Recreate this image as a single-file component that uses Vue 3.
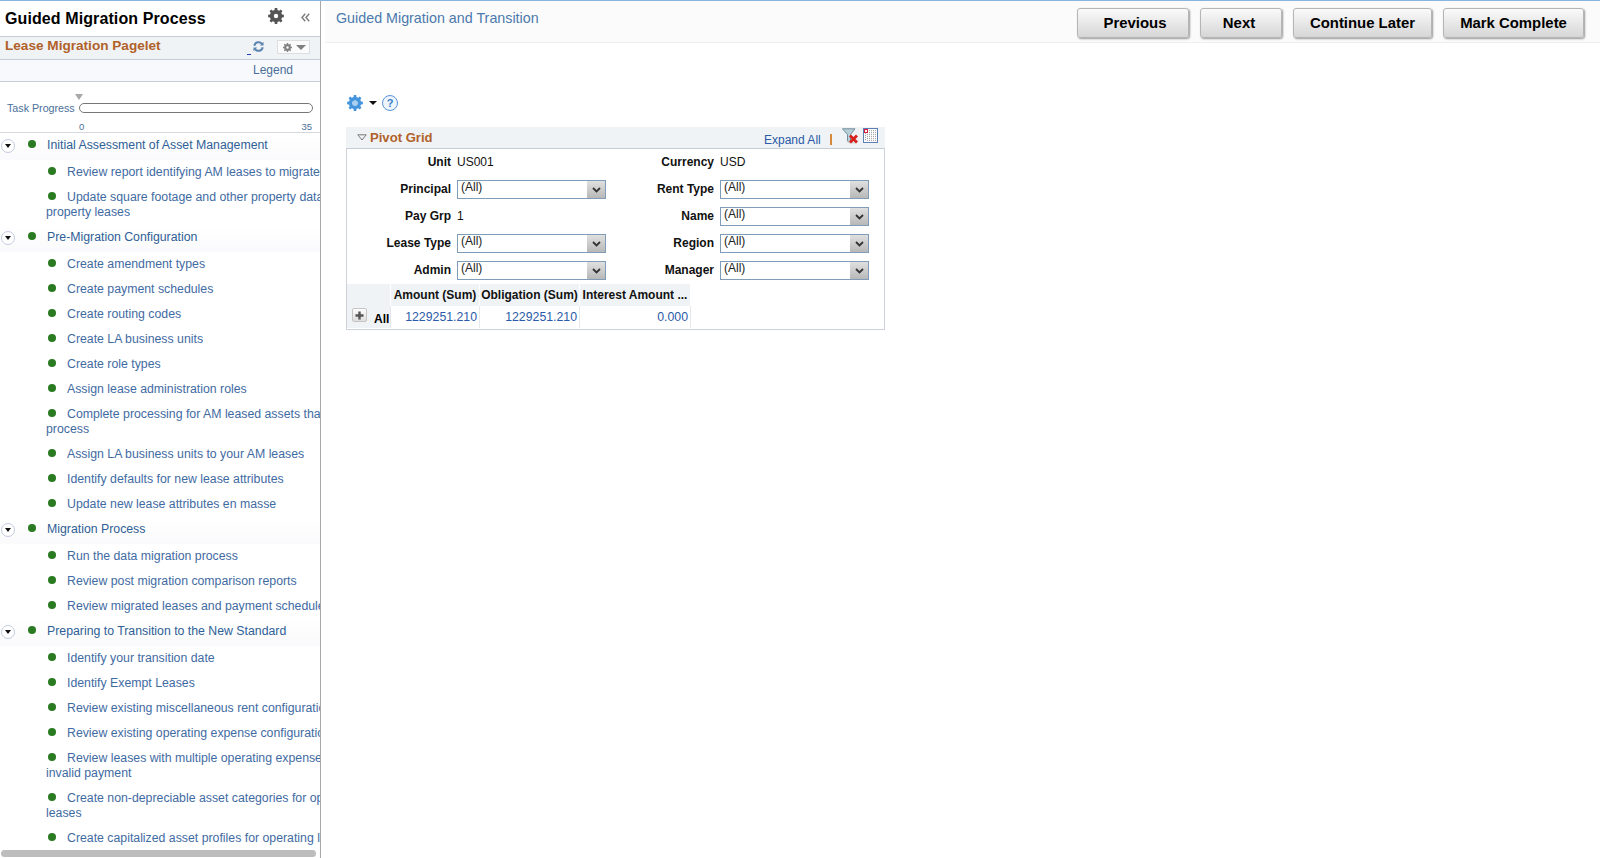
<script setup>
const gearPath = (cx, cy, ro, ri, hole, teeth = 8) => {
  let d = ''
  const step = (Math.PI * 2) / teeth
  for (let i = 0; i < teeth; i++) {
    const a = i * step
    const pts = [
      [ri, a - step * 0.3],
      [ro, a - step * 0.2],
      [ro, a + step * 0.2],
      [ri, a + step * 0.3],
    ]
    pts.forEach(([r, t], j) => {
      const x = (cx + r * Math.cos(t)).toFixed(2)
      const y = (cy + r * Math.sin(t)).toFixed(2)
      d += (i === 0 && j === 0 ? 'M' : 'L') + x + ' ' + y
    })
  }
  d += `Z M${cx - hole} ${cy} a${hole} ${hole} 0 1 0 ${hole * 2} 0 a${hole} ${hole} 0 1 0 ${-hole * 2} 0Z`
  return d
}
const gearLarge = gearPath(8, 8, 8, 6.2, 2.2)
const gearBlue = gearPath(8, 8, 8, 6.2, 2.6)
const gearSmall = gearPath(5, 5, 5, 3.8, 1.4)

const sections = [
  {
    title: 'Initial Assessment of Asset Management',
    items: [
      ['Review report identifying AM leases to migrate'],
      ['Update square footage and other property data for', 'property leases'],
    ],
  },
  {
    title: 'Pre-Migration Configuration',
    items: [
      ['Create amendment types'],
      ['Create payment schedules'],
      ['Create routing codes'],
      ['Create LA business units'],
      ['Create role types'],
      ['Assign lease administration roles'],
      ['Complete processing for AM leased assets that', 'process'],
      ['Assign LA business units to your AM leases'],
      ['Identify defaults for new lease attributes'],
      ['Update new lease attributes en masse'],
    ],
  },
  {
    title: 'Migration Process',
    items: [
      ['Run the data migration process'],
      ['Review post migration comparison reports'],
      ['Review migrated leases and payment schedules'],
    ],
  },
  {
    title: 'Preparing to Transition to the New Standard',
    items: [
      ['Identify your transition date'],
      ['Identify Exempt Leases'],
      ['Review existing miscellaneous rent configuration'],
      ['Review existing operating expense configuration'],
      ['Review leases with multiple operating expense', 'invalid payment'],
      ['Create non-depreciable asset categories for op', 'leases'],
      ['Create capitalized asset profiles for operating leases'],
    ],
  },
]

const filters = [
  { label: 'Unit', value: 'US001' },
  { label: 'Currency', value: 'USD' },
  { label: 'Principal' },
  { label: 'Rent Type' },
  { label: 'Pay Grp', value: '1' },
  { label: 'Name' },
  { label: 'Lease Type' },
  { label: 'Region' },
  { label: 'Admin' },
  { label: 'Manager' },
]
</script>

<template>
  <div class="page">
    <aside class="side">
      <div class="side-head">
        <span class="side-title">Guided Migration Process</span>
        <svg class="head-gear" width="16" height="16" viewBox="0 0 16 16"><path :d="gearLarge" fill="#555" fill-rule="evenodd" /></svg>
        <svg class="head-collapse" width="9" height="9" viewBox="0 0 9 9"><path d="M4.200 .8 1 4.500 4.200 8.200M8.200 .8 5 4.500 8.200 8.200" fill="none" stroke="#808080" stroke-width="1.500" /></svg>
      </div>
      <div class="pagelet-head">
        <span class="pagelet-title">Lease Migration Pagelet</span>
        <span class="underscore"></span>
        <svg class="refresh" width="11" height="11" viewBox="0 0 12 12"><path d="M1.400 5.200A4.700 4.700 0 0 1 9.800 3.200M10.600 6.800A4.700 4.700 0 0 1 2.200 8.800" fill="none" stroke="#5b84b0" stroke-width="2.200" /><path d="M11.500 .8V5H7.500ZM.5 11.200V7H4.500Z" fill="#5b84b0" /></svg>
        <span class="pagelet-menu">
          <svg width="9" height="9" viewBox="0 0 10 10"><path :d="gearSmall" fill="#808080" fill-rule="evenodd" /></svg>
          <i class="menu-caret"></i>
        </span>
      </div>
      <div class="legend-row">Legend</div>
      <div class="progress">
        <i class="progress-mark"></i>
        <div class="progress-line">
          <span class="progress-label">Task Progress</span>
          <span class="progress-bar"></span>
        </div>
        <div class="progress-scale"><span>0</span><span>35</span></div>
      </div>
      <div class="task-list">
        <template v-for="s in sections" :key="s.title">
          <div class="section-row">
            <span class="toggle"><i></i></span>
            <i class="dot section-dot"></i>
            <span class="section-title">{{ s.title }}</span>
          </div>
          <div v-for="it in s.items" :key="it[0]" class="item">
            <div class="item-first"><i class="dot"></i><span>{{ it[0] }}</span></div>
            <div v-if="it[1]" class="item-second">{{ it[1] }}</div>
          </div>
        </template>
      </div>
      <div class="hscroll"></div>
    </aside>

    <main class="main">
      <header class="main-head">
        <span class="main-title">Guided Migration and Transition</span>
        <div class="buttons">
          <button class="btn btn-prev">Previous</button>
          <button class="btn btn-next">Next</button>
          <button class="btn btn-later">Continue Later</button>
          <button class="btn btn-done">Mark Complete</button>
        </div>
      </header>
      <section class="content">
        <div class="tools">
          <svg width="16" height="16" viewBox="0 0 16 16"><path :d="gearBlue" fill="#4595dc" fill-rule="evenodd" /><circle cx="8" cy="8" r="2.600" fill="#a9d0f2" /></svg>
          <i class="tool-caret"></i>
          <span class="help">?</span>
        </div>
        <div class="pivot">
          <div class="pivot-head">
            <svg width="10" height="7" viewBox="0 0 10 7"><path d="M.8.8H9.200L5 6Z" fill="none" stroke="#777" /></svg>
            <span class="pivot-title">Pivot Grid</span>
            <a class="expand">Expand All</a>
            <span class="pipe"></span>
            <svg class="filter-ico" width="17" height="16" viewBox="0 0 17 16">
              <path d="M.5 .8H13L8.500 6.500V14.500L5.500 13V6.500Z" fill="#b9cfd8" stroke="#6f8e9c" />
              <path d="M4 13.500 7 15.500H14V13.500Z" fill="#d5d5d5" />
              <path d="M8 7.500 15 14.500M15 7.500 8 14.500" stroke="#d8201a" stroke-width="2.800" />
            </svg>
            <svg class="grid-ico" width="15" height="15" viewBox="0 0 15 15">
              <rect x=".5" y=".5" width="14" height="14" fill="#fff" stroke="#5b7fb5" />
              <path d="M2.500 5V13M4.500 2V13M6.500 2V13M8.500 2V13M10.500 2V13M12.500 2V13" stroke="#a8a8a8" stroke-dasharray="1.200 .8" />
              <rect x="1.500" y="1.500" width="3" height="3" fill="#fff" stroke="#e0203a" />
            </svg>
          </div>
          <div class="pivot-body">
            <div class="filters">
              <template v-for="f in filters" :key="f.label">
                <label class="f-label">{{ f.label }}</label>
                <div v-if="f.value" class="f-value">{{ f.value }}</div>
                <div v-else class="select">
                  <span>(All)</span>
                  <i class="select-btn">
                    <svg width="9" height="6" viewBox="0 0 9 6"><path d="M1 1 4.500 4.500 8 1" fill="none" stroke="#333" stroke-width="1.800" /></svg>
                  </i>
                </div>
              </template>
            </div>
            <div class="pgrid">
              <div class="cell hd"></div>
              <div class="cell hd">Amount (Sum)</div>
              <div class="cell hd">Obligation (Sum)</div>
              <div class="cell hd">Interest Amount ...</div>
              <div class="cell stub">
                <span class="plus"><svg width="9" height="9" viewBox="0 0 9 9"><path d="M4.500 .5V8.500M.5 4.500H8.500" stroke="#555" stroke-width="2.400" /></svg></span>
                <b>All</b>
              </div>
              <div class="cell num">1229251.210</div>
              <div class="cell num">1229251.210</div>
              <div class="cell num">0.000</div>
            </div>
          </div>
        </div>
      </section>
    </main>
    <i class="top-dark"></i>
  </div>
</template>

<style>
html, body { margin: 0; background: #fff; overflow: hidden; }
</style>

<style scoped>
.page {
  position: relative;
  display: flex;
  height: 857px;
  border-top: 1px solid #8ab4e0;
  overflow: hidden;
  font-family: "Liberation Sans", Arial, sans-serif;
  font-size: 12px;
  color: #000;
  background: #fff;
}
i { display: block; font-style: normal; }
.top-dark { position: absolute; top: -1px; right: 0; width: 40px; height: 1px; background: #16324a; }

/* sidebar */
.side {
  position: relative;
  flex: none;
  width: 320px;
  height: 857px;
  border-right: 1px solid #a8a8a8;
  overflow: hidden;
  display: flex;
  flex-direction: column;
}
.side-head {
  flex: none;
  height: 35px;
  display: flex;
  align-items: center;
  padding-left: 5px;
  position: relative;
}
.side-title { font-size: 16px; font-weight: bold; letter-spacing: 0.1px; }
.head-gear { position: absolute; left: 268px; top: 7px; }
.head-collapse { position: absolute; left: 301px; top: 12px; }
.pagelet-head {
  flex: none;
  position: relative;
  height: 22px;
  background: #f0f3f5;
  border-top: 1px solid #c5ced6;
  border-bottom: 1px solid #c5ced6;
}
.pagelet-title {
  position: absolute;
  left: 5px;
  top: 1px;
  color: #b0612a;
  font-size: 13.600px;
  font-weight: bold;
  line-height: 16px;
}
.underscore { position: absolute; left: 247px; top: 17px; width: 4px; height: 1px; background: #2040c0; }
.refresh { position: absolute; left: 253px; top: 4px; }
.pagelet-menu {
  position: absolute;
  left: 277px;
  top: 3px;
  width: 33px;
  height: 14px;
  border: 1px solid #dcdfe2;
  background: #fbfbfb;
  display: flex;
  align-items: center;
  gap: 4px;
  padding-left: 5px;
  box-sizing: border-box;
}
.menu-caret { border-left: 5px solid transparent; border-right: 5px solid transparent; border-top: 5px solid #808080; }
.legend-row {
  flex: none;
  height: 21px;
  line-height: 21px;
  background: #f7f9fd;
  border-bottom: 1px solid #c5ced6;
  padding-left: 253px;
  color: #4a6f99;
  font-size: 12px;
}
.progress {
  flex: none;
  position: relative;
  height: 50px;
  border-bottom: 1px solid #d5d9dd;
}
.progress-mark {
  position: absolute;
  left: 75px;
  top: 12px;
  border-left: 4px solid transparent;
  border-right: 4px solid transparent;
  border-top: 6px solid #a8a8a8;
}
.progress-line {
  position: absolute;
  left: 7px;
  top: 19px;
  display: flex;
  align-items: center;
  gap: 4px;
}
.progress-label { font-size: 10.700px; color: #4a6f99; line-height: 14px; }
.progress-bar {
  width: 232px;
  height: 8px;
  border: 1px solid #777;
  border-radius: 5px;
  background: #fff;
}
.progress-scale {
  position: absolute;
  left: 79px;
  top: 39px;
  width: 233px;
  display: flex;
  justify-content: space-between;
  font-size: 9.500px;
  line-height: 11px;
  color: #4a6f99;
}
.task-list { flex: 1; min-height: 0; overflow: hidden; color: #3f6ba3; font-size: 12.300px; }
.section-row {
  position: relative;
  height: 15px;
  padding: 5px 0 7px 47px;
  line-height: 15px;
  white-space: nowrap;
  background: linear-gradient(#fff, #fafafc);
  color: #2f5f96;
  font-size: 12.300px;
}
.toggle {
  position: absolute;
  left: 1px;
  top: 6px;
  width: 12px;
  height: 12px;
  border: 1px solid #c3cbe0;
  border-radius: 50%;
  display: flex;
  align-items: center;
  justify-content: center;
  background: #fff;
}
.toggle i { border-left: 3.500px solid transparent; border-right: 3.500px solid transparent; border-top: 4px solid #111; }
.dot { width: 8px; height: 8px; border-radius: 50%; background: #2a7a22; }
.section-dot { position: absolute; left: 28px; top: 7px; }
.item { padding: 5px 0 5px 46px; line-height: 15px; white-space: nowrap; }
.item-first { position: relative; padding-left: 21px; }
.item-first .dot { position: absolute; left: 2px; top: 2px; }
.item-second { color: #3f6ba3; }
.hscroll {
  position: absolute;
  left: 1px;
  bottom: 1px;
  width: 315px;
  height: 7px;
  border-radius: 4px;
  background: #bdbdbd;
}

/* main */
.main { flex: 1; min-width: 0; padding-left: 4px; display: flex; flex-direction: column; }
.main-head {
  flex: none;
  height: 42px;
  background: #fbfbfb;
  border-bottom: 1px solid #eeeeee;
  display: flex;
  align-items: flex-start;
  justify-content: space-between;
  box-sizing: border-box;
  padding: 0 16px 0 11px;
}
.main-title { font-size: 14.300px; line-height: 34px; color: #4b79ad; }
.buttons { display: flex; gap: 11px; padding-top: 7px; }
.btn {
  height: 30px;
  box-sizing: border-box;
  border: 1px solid #b5b5b5;
  border-radius: 3px;
  background: linear-gradient(#fafafa, #d6d6d6);
  box-shadow: 1px 1px 2px #999;
  font-family: inherit;
  font-size: 14.900px;
  font-weight: bold;
  color: #000;
  padding: 0;
}
.btn-prev { width: 112px; padding-left: 4px; }
.btn-next { width: 82px; padding-right: 4px; }
.btn-later { width: 139px; }
.btn-done { width: 141px; }
.content { padding: 52px 0 0 21px; }
.tools { display: flex; align-items: center; height: 16px; margin-left: 1px; }
.tool-caret { margin-left: 6px; border-left: 4px solid transparent; border-right: 4px solid transparent; border-top: 4px solid #111; }
.help {
  margin-left: 5px;
  width: 14px;
  height: 14px;
  border: 1px solid #5b93dc;
  border-radius: 50%;
  background: #eef5fd;
  color: #3b7fcb;
  font-size: 11px;
  font-weight: bold;
  line-height: 14px;
  text-align: center;
}
.pivot { width: 539px; margin-top: 16px; }
.pivot-head {
  position: relative;
  height: 21px;
  background: #f0f3f5;
  display: flex;
  align-items: center;
  padding-left: 11px;
}
.pivot-title { margin-left: 3px; color: #b0612a; font-size: 13.100px; font-weight: bold; }
.expand { position: absolute; left: 418px; top: 6px; color: #2a5aa8; font-size: 12px; line-height: 15px; }
.pipe { position: absolute; left: 484px; top: 7px; width: 2px; height: 11px; background: #d58a3c; }
.filter-ico { position: absolute; left: 496px; top: 1px; }
.grid-ico { position: absolute; left: 517px; top: 1px; }
.pivot-body { border: 1px solid #ccd2d8; border-top-color: #c5ced6; box-sizing: border-box; padding-bottom: 1px; }
.filters {
  display: grid;
  grid-template-columns: 104px 149px 102px 149px;
  column-gap: 6px;
  grid-auto-rows: 27px;
  height: 136px;
  margin-top: -1px;
  align-items: center;
}
.f-label { font-weight: bold; text-align: right; color: #111; }
.f-value { color: #111; }
.select {
  position: relative;
  height: 19px;
  margin-top: 2px;
  border: 1px solid #7f9db9;
  box-sizing: border-box;
  background: #fff;
  padding-left: 3px;
  line-height: 13px;
  color: #222;
}
.select-btn {
  position: absolute;
  right: 0;
  top: 0;
  bottom: 0;
  width: 18px;
  background: linear-gradient(#e0e0e0, #b8b8b8);
  display: flex;
  align-items: center;
  justify-content: center;
}
.pgrid {
  display: grid;
  grid-template-columns: 44px 89px 100px 111px;
  grid-template-rows: 22px 22px;
  width: 344px;
}
.cell { line-height: 22px; white-space: nowrap; overflow: hidden; box-sizing: border-box; border-right: 1px solid #e6e9ec; }
.hd { background: #f0f3f5; font-weight: bold; text-align: center; border-right-color: #fff; color: #111; }
.stub { background: #f0f3f5; display: flex; align-items: center; position: relative; }
.stub b { position: absolute; left: 27px; top: 2px; }
.plus {
  position: absolute;
  left: 5px;
  top: 2px;
  width: 15px;
  height: 14px;
  border: 1px solid #c5c5c5;
  border-radius: 2px;
  background: linear-gradient(#fff, #ddd);
  box-sizing: border-box;
  display: flex;
  align-items: center;
  justify-content: center;
}
.num { text-align: right; padding-right: 2px; color: #2a5aa8; font-size: 12.300px; }
</style>
